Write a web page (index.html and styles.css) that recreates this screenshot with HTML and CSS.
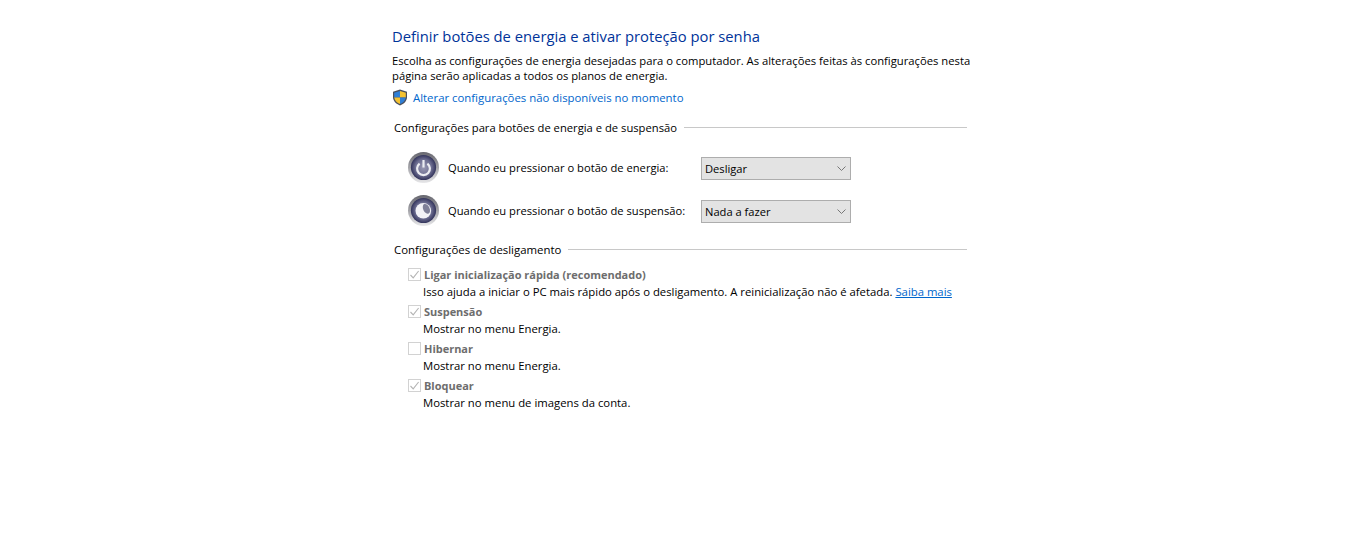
FILE: index.html
```html
<!DOCTYPE html>
<html lang="pt-BR">
<head>
<meta charset="utf-8">
<title>Definir botões de energia</title>
<link rel="stylesheet" href="styles.css">
</head>
<body>
<main class="page">
  <h1 class="title">Definir botões de energia e ativar proteção por senha</h1>
  <p class="intro">Escolha as configurações de energia desejadas para o computador. As alterações feitas às configurações nesta<br>página serão aplicadas a todos os planos de energia.</p>
  <div class="uac">
    <svg class="shield" viewBox="0 0 16 17" width="16" height="17" aria-hidden="true">
      <path d="M8 .5 L15 2.8 V8 C15 12 12 15 8 16.5 C4 15 1 12 1 8 V2.8 Z" fill="#4a4f5c"/>
      <path d="M8 2 L8 8.5 H2.2 V3.8 Z" fill="#2f7fd6"/>
      <path d="M8 2 L13.8 3.8 V8.5 H8 Z" fill="#f5c230"/>
      <path d="M2.2 8.5 H8 V15 C5 13.8 2.5 11.5 2.2 8.5 Z" fill="#f5c230"/>
      <path d="M8 8.5 H13.8 C13.5 11.5 11 13.8 8 15 Z" fill="#2f7fd6"/>
    </svg>
    <a class="link-blue" href="#">Alterar configurações não disponíveis no momento</a>
  </div>

  <div class="section section-power">
    <span class="section-label">Configurações para botões de energia e de suspensão</span>
    <span class="rule"></span>
  </div>
  <div class="power-row">
    <svg class="orb" viewBox="0 0 31 31" width="31" height="31" aria-hidden="true">
      <defs>
        <linearGradient id="rimA" x1="0" y1="0" x2="0" y2="1"><stop offset="0" stop-color="#66666e"/><stop offset=".5" stop-color="#a4a4a9"/><stop offset="1" stop-color="#e8e8ea"/></linearGradient>
        <radialGradient id="coreA" cx=".5" cy=".5" r=".52"><stop offset="0" stop-color="#9a9ab4"/><stop offset=".62" stop-color="#6c6d90"/><stop offset="1" stop-color="#2c2d55"/></radialGradient>
      </defs>
      <circle cx="15.5" cy="15.5" r="15.5" fill="url(#rimA)"/>
      <circle cx="15.5" cy="15.5" r="12.6" fill="url(#coreA)"/>
      <path d="M11.6 11.6 A6.4 6.4 0 1 0 19.4 11.6" fill="none" stroke="#ecedf2" stroke-width="2.2"/>
      <path d="M15.5 8 V15.5" fill="none" stroke="#ecedf2" stroke-width="2.2"/>
    </svg>
    <label class="power-label">Quando eu pressionar o botão de energia:</label>
    <div class="select"><span>Desligar</span><svg class="chev" viewBox="0 0 9 5" width="9" height="5" aria-hidden="true"><path d="M.5 .5 L4.5 4.5 L8.5 .5" fill="none" stroke="#777" stroke-width="1"/></svg></div>
  </div>
  <div class="power-row">
    <svg class="orb" viewBox="0 0 31 31" width="31" height="31" aria-hidden="true">
      <circle cx="15.5" cy="15.5" r="15.5" fill="url(#rimA)"/>
      <circle cx="15.5" cy="15.5" r="12.6" fill="url(#coreA)"/>
      <circle cx="15.3" cy="15.8" r="7.8" fill="#f2f2f6"/>
      <ellipse cx="18.4" cy="13.8" rx="3.2" ry="5.2" transform="rotate(-25 18.4 13.8)" fill="#7f8098"/>
    </svg>
    <label class="power-label">Quando eu pressionar o botão de suspensão:</label>
    <div class="select"><span>Nada a fazer</span><svg class="chev" viewBox="0 0 9 5" width="9" height="5" aria-hidden="true"><path d="M.5 .5 L4.5 4.5 L8.5 .5" fill="none" stroke="#777" stroke-width="1"/></svg></div>
  </div>

  <div class="section section-off">
    <span class="section-label section-label-off">Configurações de desligamento</span>
    <span class="rule"></span>
  </div>
  <div class="option">
    <div class="option-head"><span class="box"><svg viewBox="0 0 13 13" width="13" height="13" aria-hidden="true"><path d="M2.5 7 L5.2 9.8 L10.6 3" fill="none" stroke="#b4b4b4" stroke-width="1.1"/></svg></span><span class="option-name">Ligar inicialização rápida (recomendado)</span></div>
    <p class="option-desc">Isso ajuda a iniciar o PC mais rápido após o desligamento. A reinicialização não é afetada. <a class="link-under" href="#">Saiba mais</a></p>
  </div>
  <div class="option">
    <div class="option-head"><span class="box"><svg viewBox="0 0 13 13" width="13" height="13" aria-hidden="true"><path d="M2.5 7 L5.2 9.8 L10.6 3" fill="none" stroke="#b4b4b4" stroke-width="1.1"/></svg></span><span class="option-name">Suspensão</span></div>
    <p class="option-desc">Mostrar no menu Energia.</p>
  </div>
  <div class="option">
    <div class="option-head"><span class="box"></span><span class="option-name">Hibernar</span></div>
    <p class="option-desc">Mostrar no menu Energia.</p>
  </div>
  <div class="option">
    <div class="option-head"><span class="box"><svg viewBox="0 0 13 13" width="13" height="13" aria-hidden="true"><path d="M2.5 7 L5.2 9.8 L10.6 3" fill="none" stroke="#b4b4b4" stroke-width="1.1"/></svg></span><span class="option-name">Bloquear</span></div>
    <p class="option-desc">Mostrar no menu de imagens da conta.</p>
  </div>
</main>
</body>
</html>
```
FILE: styles.css
```css
* { box-sizing: border-box; }
html, body { margin: 0; padding: 0; background: #fff; }
body { font-family: "Open Sans", "Noto Sans", sans-serif; font-size: 11.26px; color: #000; height: 540px; overflow: hidden; }
.page { width: 578px; margin-left: 392px; padding-top: 26px; }
.title { margin: 0; font-weight: 400; font-size: 14.78px; line-height: 20px; color: #003399; }
.intro { margin: 7px 0 0; line-height: 15px; white-space: nowrap; }
.uac { display: flex; align-items: center; margin-top: 4px; height: 20px; gap: 5px; }
.shield { display: block; flex: none; }
.link-blue { color: #0066cc; text-decoration: none; font-size: 11.38px; }
.section { display: flex; align-items: center; width: 575px; padding-left: 2px; gap: 7px; height: 16px; }
.section-label { font-size: 11.22px; }
.section-label-off { font-size: 11.42px; }
.section-power { margin-top: 12px; }
.section-off { margin-top: 14px; }
.rule { flex: 1; height: 1px; background: #c8c8c8; }
.power-row { display: flex; align-items: flex-start; height: 32px; margin-left: 16px; margin-top: 11px; }
.section-power + .power-row { margin-top: 17px; }
.orb { display: block; flex: none; }
.power-label { margin: 8px 0 0 9px; width: 253px; white-space: nowrap; font-size: 11.18px; }
.select { display: flex; align-items: center; justify-content: space-between; width: 150px; height: 23px; margin-top: 5px; padding: 0 2px 0 3px; background: #e3e3e3; border: 1px solid #adadad; font-size: 11.15px; }
.chev { display: block; margin-right: 2px; }
.option { margin-left: 16px; height: 37px; }
.section-off + .option { margin-top: 8px; }
.option-head { display: flex; align-items: center; height: 18px; }
.box { display: flex; width: 13px; height: 13px; flex: none; margin-top: 1px; border: 1px solid #d2d2d2; background: #fff; align-items: center; justify-content: center; }
.box svg { display: block; flex: none; }
.option-name { margin-left: 3px; font-weight: 700; font-size: 10.97px; color: #6d6d6d; }
.option-desc { margin: 0 0 0 15px; line-height: 17px; white-space: nowrap; font-size: 11.32px; }
.link-under { color: #0066cc; text-decoration: underline; }
```
